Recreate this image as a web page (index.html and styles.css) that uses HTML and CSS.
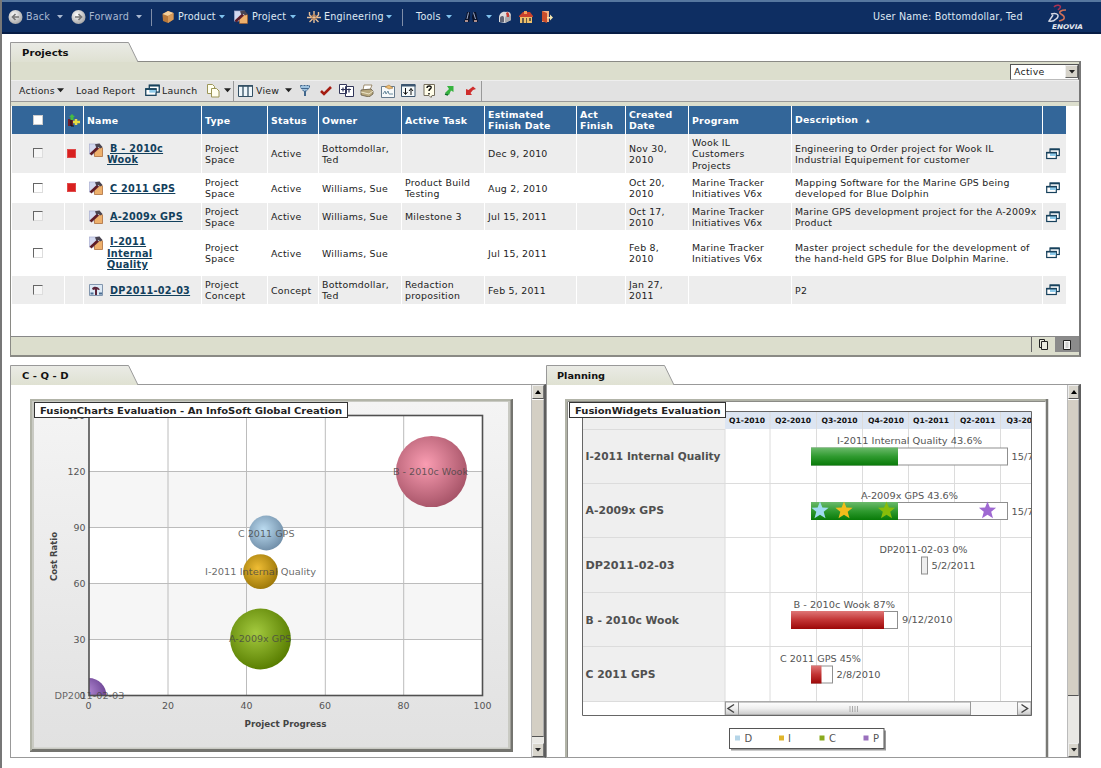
FILE: index.html
```html
<!DOCTYPE html>
<html lang="en">
<head>
<meta charset="utf-8">
<title>Projects</title>
<link rel="stylesheet" href="styles.css">
</head>
<body>
<svg class="defs" width="0" height="0">
  <defs>
    <symbol id="caret" viewBox="0 0 6 4"><path d="M0 0H6L3 3.6Z" fill="currentColor"/></symbol>
    <symbol id="project" viewBox="0 0 14 14">
      <rect x=".5" y="1" width="10" height="10" fill="#d3d9f0" stroke="#a9aed0" stroke-width=".7"/>
      <path d="M5.500 9.500L12 3.500l1.500 1.500v8.500h-8z" fill="#eeb06c" stroke="#a4602c" stroke-width=".7"/>
      <path d="M1.500 11.500L9 4.500" stroke="#5e1c28" stroke-width="2.600"/>
      <path d="M6 1.200l4.500-.7L13.500 4l-1.800 1.400L9.500 4 8 5 6.800 3.500z" fill="#4a4450"/>
    </symbol>
    <symbol id="window" viewBox="0 0 14 12">
      <rect x="4" y="1" width="9.300" height="6.500" fill="#fff" stroke="#17415c" stroke-width="1.200"/>
      <path d="M4 1.500h9.300" stroke="#17415c" stroke-width="1.600"/>
      <rect x=".7" y="4.500" width="9.600" height="6" fill="#fff" stroke="#17415c" stroke-width="1.200"/>
      <rect x="4" y="5" width="6" height="3" fill="#8fcbea"/>
      <path d="M.2 4.700h10.600" stroke="#17415c" stroke-width="1.500"/>
    </symbol>
    <linearGradient id="tabFill" x1="0" y1="0" x2="0" y2="1"><stop offset="0" stop-color="#eaebe6"/><stop offset="1" stop-color="#dfe1d2"/></linearGradient>
    <linearGradient id="canvasFill" x1="0" y1="0" x2="0" y2="1"><stop offset="0" stop-color="#f4f4f4"/><stop offset="1" stop-color="#e1e1e1"/></linearGradient>
    <linearGradient id="green" x1="0" y1="0" x2="0" y2="1"><stop offset="0" stop-color="#6cba6c"/><stop offset=".5" stop-color="#2f9a2f"/><stop offset="1" stop-color="#087a08"/></linearGradient>
    <linearGradient id="red" x1="0" y1="0" x2="0" y2="1"><stop offset="0" stop-color="#df7777"/><stop offset=".5" stop-color="#c23434"/><stop offset="1" stop-color="#9c0808"/></linearGradient>
    <linearGradient id="thumb" x1="0" y1="0" x2="0" y2="1"><stop offset="0" stop-color="#fff"/><stop offset=".5" stop-color="#eee"/><stop offset="1" stop-color="#c8c8c8"/></linearGradient>
    <radialGradient id="pinkBall" cx=".42" cy=".4" r=".62"><stop offset="0" stop-color="#fa9db2"/><stop offset="1" stop-color="#a75468"/></radialGradient>
    <radialGradient id="blueBall" cx=".42" cy=".4" r=".62"><stop offset="0" stop-color="#bcdcf1"/><stop offset="1" stop-color="#718fa9"/></radialGradient>
    <radialGradient id="goldBall" cx=".42" cy=".4" r=".62"><stop offset="0" stop-color="#efbd35"/><stop offset="1" stop-color="#9d7808"/></radialGradient>
    <radialGradient id="greenBall" cx=".42" cy=".4" r=".62"><stop offset="0" stop-color="#a4ca3f"/><stop offset="1" stop-color="#587d00"/></radialGradient>
    <radialGradient id="purpleBall" cx=".42" cy=".4" r=".62"><stop offset="0" stop-color="#b58bd6"/><stop offset="1" stop-color="#684090"/></radialGradient>
    <radialGradient id="navBall" cx=".4" cy=".35" r=".65"><stop offset="0" stop-color="#fff"/><stop offset="1" stop-color="#a9a9a9"/></radialGradient>
  </defs>
</svg>
<div class="page">
  <header class="topbar">
    <svg width="15" height="16" viewBox="0 0 15 16"><circle cx="7.500" cy="8" r="7" fill="url(#navBall)"/><path d="M11 8H4.500M7.500 5L4.500 8l3 3" stroke="#777" stroke-width="1.700" fill="none"/></svg>
    <span class="dim">Back</span>
    <svg class="caret dim" width="6" height="4"><use href="#caret"/></svg>
    <svg width="15" height="16" viewBox="0 0 15 16"><circle cx="7.500" cy="8" r="7" fill="url(#navBall)"/><path d="M4 8h6.500M7.500 5l3 3-3 3" stroke="#777" stroke-width="1.700" fill="none"/></svg>
    <span class="dim">Forward</span>
    <svg class="caret dim" width="6" height="4"><use href="#caret"/></svg>
    <i class="divider"></i>
    <svg width="12" height="14" viewBox="0 0 12 14"><path d="M.5 4L6 1l5.500 2v6.500L6 13 1 11z" fill="#b8783a"/><path d="M.5 4L6 1l5.500 2L6 6z" fill="#f3cf9c"/><path d="M6 6l5.500-3v6.500L6 13z" fill="#d79a58"/></svg>
    <span>Product</span>
    <svg class="caret blue" width="6" height="4"><use href="#caret"/></svg>
    <svg width="14" height="14"><use href="#project"/></svg>
    <span>Project</span>
    <svg class="caret blue" width="6" height="4"><use href="#caret"/></svg>
    <svg width="14" height="14" viewBox="0 0 14 14" fill="none"><path d="M7 1v12M2.500 2v3l2.500 2M11.500 2v3L9 7M0 7.500h14M2.500 12l3-3M11.500 12l-3-3" stroke="#e6bf98" stroke-width="1.400"/><circle cx="7" cy="7" r="2.200" stroke="#c98042"/></svg>
    <span>Engineering</span>
    <svg class="caret blue" width="6" height="4"><use href="#caret"/></svg>
    <i class="divider"></i>
    <span>Tools</span>
    <svg class="caret blue" width="6" height="4"><use href="#caret"/></svg>
    <svg width="14" height="14" viewBox="0 0 14 14"><path d="M3 2h3v5l-1 5H0l2-5zM9 2h3l1 5 1 5H9L8 7z" fill="#0a1228"/><path d="M4.500 2.500L3 9M9.500 2.500L11.500 9" stroke="#9eabc9" stroke-width="1"/><path d="M1 11h3M10 11h3" stroke="#e2b7ac" stroke-width="1.500"/></svg>
    <svg class="caret blue" width="6" height="4"><use href="#caret"/></svg>
    <svg width="13" height="14" viewBox="0 0 13 14"><path d="M0 8c0-4 3-7 7-6 3-1 5 1 5 4v4l-6 3-6-1z" fill="#dcdcdc"/><path d="M6 13V8c1-4 5-4 6-2v4z" fill="#a9a9ad"/><path d="M1 8c0-2 4-3 4 0v4H1z" fill="#606474"/><path d="M7 3l2-1 1 2v3H8z" fill="#c83b31"/></svg>
    <svg width="14" height="14" viewBox="0 0 14 14"><path d="M0 6l4-4h7l3 4v1H0z" fill="#c8412c"/><path d="M1 7h12v6H1z" fill="#efc06a"/><path d="M5 1l3 0v3H5z" fill="#f1a05a"/><path d="M3 8h2v5H3zM7 8h1v5H7zM10 8h2v3h-2z" fill="#675c4a"/></svg>
    <svg width="12" height="14" viewBox="0 0 12 14"><path d="M1 1h7v11H1z" fill="#f2b184"/><path d="M1 1l5 2v10l-5-2z" fill="#c94e2c"/><path d="M6 7h3V4.500L12 7.500l-3 3V8.500H6z" fill="#f5e6b0"/></svg>
    <span class="user">User Name: Bottomdollar, Ted</span>
    <svg width="40" height="27" viewBox="0 0 40 27"><path d="M7 3c2-3 8-2 6 1l-2 2" stroke="#a83252" stroke-width="1.500" fill="none"/><path d="M4 10c7-2 9 2 5 5-2 2-4 3-7 2l4-6" stroke="#d4d9e5" stroke-width="1.500" fill="none"/><path d="M19 6c-5 0-8 2-5 4 5 3 4 6-2 7" stroke="#cf7058" stroke-width="1.600" fill="none"/><text x="5" y="25" class="logo-text" textLength="31" lengthAdjust="spacingAndGlyphs">ENOVIA</text></svg>
  </header>

  <section class="projects">
    <svg class="tab" width="129" height="20" viewBox="0 0 129 20"><path d="M.5 20V.5H118.500L128 20" fill="url(#tabFill)" stroke="#999"/><text x="12" y="14" class="tab-text" textLength="46.500" lengthAdjust="spacingAndGlyphs">Projects</text></svg>
    <div class="panel">
      <div class="filterbar"><div class="select"><span>Active</span><b><svg width="6" height="4"><use href="#caret"/></svg></b></div></div>
      <div class="toolbar">
        <span>Actions</span>
        <svg class="caret" width="7" height="5"><use href="#caret"/></svg>
        <span>Load Report</span>
        <svg width="15" height="13"><use href="#window"/></svg>
        <span>Launch</span>
        <svg width="13" height="14" viewBox="0 0 13 14" fill="#fffff0" stroke="#9c9658"><path d="M.5.500h5l2 2v7h-7z"/><path d="M4.500 4.500h5l2.500 2.500v6H4.500z"/></svg>
        <svg class="caret" width="7" height="5"><use href="#caret"/></svg>
        <i class="divider"></i>
        <svg width="15" height="12" viewBox="0 0 15 12"><path d="M.5.500h14v11H.5z" fill="#eef6fa" stroke="#345064"/><path d="M0 1h15" stroke="#345064" stroke-width="1.600"/><path d="M5 1v10M10 1v10" stroke="#345064" stroke-width="1.300"/></svg>
        <span>View</span>
        <svg class="caret" width="7" height="5"><use href="#caret"/></svg>
        <svg width="10" height="11" viewBox="0 0 10 11"><path d="M.5.500h9v2L6.500 6h-3L.5 2.500z" fill="#9fc3df" stroke="#42678c" stroke-dasharray="2 1"/><path d="M1.500 3.500h7" stroke="#42678c"/><path d="M5 6v5" stroke="#42678c" stroke-width="2"/></svg>
        <svg width="12" height="11" viewBox="0 0 12 11"><path d="M1 6l3 3L11 2" stroke="#a51d12" stroke-width="2.600" fill="none"/></svg>
        <svg width="15" height="13" viewBox="0 0 15 13" fill="#fff" stroke="#32365a"><path d="M.5.500h7v9h-7zM6.500 2.500h8v10h-8z"/><path d="M2 5.500h10M4 3.500v4M10 4.500v4" stroke-width="1.200"/></svg>
        <svg width="14" height="13" viewBox="0 0 14 13"><path d="M4 1l8 0-2 5H3z" fill="#fff" stroke="#8b7651" stroke-width=".8"/><path d="M1 6l10-1 2 2v3l-4 3-8-2z" fill="#b7a77d" stroke="#665b45" stroke-width=".8"/><path d="M1 8l8 2 4-3" stroke="#ede5c8" fill="none"/></svg>
        <svg width="14" height="14" viewBox="0 0 14 14"><path d="M.5 2.500h13v11H.5z" fill="#f6f9fa" stroke="#657a8c"/><path d="M4 3l4-2 4 3-4 1z" fill="#edbd73" stroke="#a8793b" stroke-width=".6"/><path d="M2 10l2-3 1 3 2-3 1 3h4" stroke="#6c8c9e" fill="none"/></svg>
        <svg width="15" height="13" viewBox="0 0 15 13"><path d="M.5.500h13.500v12H.5z" fill="#f6fafb" stroke="#3d5670"/><path d="M0 1.500h14.500" stroke="#3d5670" stroke-width="2"/><path d="M4.500 4v6M2.500 8l2 2.500 2-2.500M10 11V4.500M8 7l2-2.500L12 7" fill="none" stroke="#111"/></svg>
        <svg width="13" height="14" viewBox="0 0 13 14"><path d="M1 .5h10.500v11H9L8 13.500 6 11.500H1z" fill="#fffde9" stroke="#756e5c"/><path d="M4 4c0-3 5-2.500 4 0-.5 1-2 1-2 3M6 9v1.500" stroke="#111" stroke-width="1.500" fill="none"/></svg>
        <svg width="10" height="11" viewBox="0 0 10 11"><path d="M3 1h6.500v6L7 5.500 5 10 1 8l4-4z" fill="#36b33e"/><path d="M1 9l3 1" stroke="#0b6d25" stroke-width="1.500"/></svg>
        <svg width="11" height="10" viewBox="0 0 11 10"><path d="M1 3v6h6L5.500 7 8 4l3-1L8 .5 3.500 4z" fill="#cf2d2c"/></svg>
        <i class="divider"></i>
      </div>
      <div class="grid">
        <div class="row head">
          <div class="mid"><i class="check solid"></i></div>
          <div class="mid"><svg width="13" height="14" viewBox="0 0 13 14"><path d="M1 6h5v7H1z" fill="#721f2c"/><path d="M5 1l3 3H6.500v3h-3V4H2z" fill="#45bc41"/><path d="M9 6v6M6 9h7" stroke="#e8dc42" stroke-width="2.500"/><path d="M4 7v6h3" stroke="#111" fill="none"/></svg></div>
          <div>Name</div><div>Type</div><div>Status</div><div>Owner</div><div>Active Task</div><div>Estimated<br>Finish Date</div><div>Act<br>Finish</div><div>Created<br>Date</div><div>Program</div><div><p>Description <small>▲</small></p></div><div></div>
        </div>
        <div class="row r1 alt">
          <div class="mid"><i class="check"></i></div><div class="mid"><i class="flag"></i></div>
          <div class="name"><svg width="14" height="14"><use href="#project"/></svg><a>B - 2010c<br>Wook</a></div>
          <div>Project<br>Space</div><div>Active</div><div>Bottomdollar,<br>Ted</div><div></div><div>Dec 9, 2010</div><div></div><div>Nov 30,<br>2010</div><div>Wook IL<br>Customers<br>Projects</div><div>Engineering to Order project for Wook IL<br>Industrial Equipement for customer</div><div><svg width="14" height="12"><use href="#window"/></svg></div>
        </div>
        <div class="row r2">
          <div class="mid"><i class="check"></i></div><div class="mid"><i class="flag"></i></div>
          <div class="name"><svg width="14" height="14"><use href="#project"/></svg><a>C 2011 GPS</a></div>
          <div>Project<br>Space</div><div>Active</div><div>Williams, Sue</div><div>Product Build<br>Testing</div><div>Aug 2, 2010</div><div></div><div>Oct 20,<br>2010</div><div>Marine Tracker<br>Initiatives V6x</div><div>Mapping Software for the Marine GPS being<br>developed for Blue Dolphin</div><div><svg width="14" height="12"><use href="#window"/></svg></div>
        </div>
        <div class="row r3 alt">
          <div class="mid"><i class="check"></i></div><div></div>
          <div class="name"><svg width="14" height="14"><use href="#project"/></svg><a>A-2009x GPS</a></div>
          <div>Project<br>Space</div><div>Active</div><div>Williams, Sue</div><div>Milestone 3</div><div>Jul 15, 2011</div><div></div><div>Oct 17,<br>2010</div><div>Marine Tracker<br>Initiatives V6x</div><div>Marine GPS development project for the A-2009x<br>Product</div><div><svg width="14" height="12"><use href="#window"/></svg></div>
        </div>
        <div class="row r4">
          <div class="mid"><i class="check"></i></div><div></div>
          <div class="name"><svg width="14" height="14"><use href="#project"/></svg><a>I-2011<br>Internal<br>Quality</a></div>
          <div>Project<br>Space</div><div>Active</div><div>Williams, Sue</div><div></div><div>Jul 15, 2011</div><div></div><div>Feb 8,<br>2010</div><div>Marine Tracker<br>Initiatives V6x</div><div>Master project schedule for the development of<br>the hand-held GPS for Blue Dolphin Marine.</div><div><svg width="14" height="12"><use href="#window"/></svg></div>
        </div>
        <div class="row r5 alt">
          <div class="mid"><i class="check"></i></div><div></div>
          <div class="name"><svg width="14" height="14" viewBox="0 0 14 14"><path d="M.5 1.500h13v11H.5z" fill="#dce9f5" stroke="#8296ae"/><path d="M3 5.500c1-2 4-2 6-1l2 2-2 .5-1-1v6H6V6.500L4 7z" fill="#5b2439"/><path d="M1.500 10.500h3M10 10.500h3" stroke="#4b6d92" stroke-width="2"/></svg><a>DP2011-02-03</a></div>
          <div>Project<br>Concept</div><div>Concept</div><div>Bottomdollar,<br>Ted</div><div>Redaction<br>proposition</div><div>Feb 5, 2011</div><div></div><div>Jan 27,<br>2011</div><div></div><div>P2</div><div><svg width="14" height="12"><use href="#window"/></svg></div>
        </div>
      </div>
      <div class="footer">
        <div class="view"><svg width="9" height="11" viewBox="0 0 9 11" fill="#e9eadf" stroke="#222"><path d="M.5.500h5v8h-5z"/><path d="M2.500 2.500h6v8h-6z"/></svg></div>
        <div class="view on"><svg width="8" height="10" viewBox="0 0 8 10"><path d="M.5.500h7v9h-7z" fill="#f4f4f4" stroke="#222"/><path d="M2.500 3h3M2.500 5h3M2.500 7h3" stroke="#aaa"/></svg></div>
      </div>
    </div>
  </section>

  <div class="charts">
    <section class="chart left">
      <svg class="tab" width="129" height="20" viewBox="0 0 129 20"><path d="M.5 20V.5H118.500L128 20" fill="url(#tabFill)" stroke="#999"/><text x="12" y="14" class="tab-text" textLength="46.500" lengthAdjust="spacingAndGlyphs">C - Q - D</text></svg>
      <div class="chart-body">
        <svg class="plot" width="520" height="372" viewBox="11 385 520 372">
          <rect x="30" y="399" width="483" height="353" fill="#74746f"/>
          <path d="M30 399h482l-2 2H32v349l-2 1z" fill="#b2b4a8"/>
          <rect x="32" y="401" width="478.500" height="348" fill="#c9cac3"/>
          <rect x="34" y="402" width="474" height="345.500" fill="url(#canvasFill)"/>
          <rect x="89" y="415.500" width="393.500" height="280" fill="#fff"/>
          <path d="M89 471.500h393v56H89zM89 583.500h393v55.500H89z" fill="#f6f6f6"/>
          <path d="M168 416v280M246.500 416v280M325.300 416v280M403.700 416v280M89 471.500h393M89 527.500h393M89 583.500h393M89 639.500h393" stroke="#bcbcbc" fill="none"/>
          <clipPath id="plotArea"><rect x="89" y="415" width="393" height="280.500"/></clipPath>
          <g clip-path="url(#plotArea)">
            <circle cx="431.500" cy="471.500" r="35.600" fill="url(#pinkBall)"/>
            <circle cx="266.300" cy="533" r="17.400" fill="url(#blueBall)"/>
            <circle cx="260.500" cy="571.700" r="17.400" fill="url(#goldBall)"/>
            <circle cx="260.500" cy="639" r="30.400" fill="url(#greenBall)"/>
            <circle cx="89" cy="695.500" r="17.400" fill="url(#purpleBall)"/>
          </g>
          <rect x="89" y="415.500" width="393.500" height="280" fill="none" stroke="#505050" stroke-width="1.600"/>
          <g class="axis">
            <text x="67" y="419" textLength="18" lengthAdjust="spacingAndGlyphs">150</text><text x="67.500" y="474.500" textLength="18" lengthAdjust="spacingAndGlyphs">120</text><text x="73.500" y="530.500" textLength="12" lengthAdjust="spacingAndGlyphs">90</text><text x="73.500" y="587" textLength="12" lengthAdjust="spacingAndGlyphs">60</text><text x="73.500" y="642.500" textLength="12" lengthAdjust="spacingAndGlyphs">30</text><text x="79.500" y="698.500" textLength="6" lengthAdjust="spacingAndGlyphs">0</text>
            <text x="85.500" y="708.500" textLength="6" lengthAdjust="spacingAndGlyphs">0</text><text x="162" y="708.500" textLength="12" lengthAdjust="spacingAndGlyphs">20</text><text x="240.500" y="708.500" textLength="12" lengthAdjust="spacingAndGlyphs">40</text><text x="319" y="708.500" textLength="12" lengthAdjust="spacingAndGlyphs">60</text><text x="397.500" y="708.500" textLength="12" lengthAdjust="spacingAndGlyphs">80</text><text x="473.500" y="708.500" textLength="18" lengthAdjust="spacingAndGlyphs">100</text>
          </g>
          <g class="bubble-label">
            <text x="393" y="474.500" textLength="75" lengthAdjust="spacingAndGlyphs">B - 2010c Wook</text>
            <text x="238" y="536.500" textLength="56.500" lengthAdjust="spacingAndGlyphs">C 2011 GPS</text>
            <text x="205" y="574.500" textLength="111" lengthAdjust="spacingAndGlyphs">I-2011 Internal Quality</text>
            <text x="229" y="642" textLength="62" lengthAdjust="spacingAndGlyphs">A-2009x GPS</text>
            <text x="54.500" y="698.500" textLength="70" lengthAdjust="spacingAndGlyphs">DP2011-02-03</text>
          </g>
          <text x="244.500" y="726.500" class="axis-title" textLength="82" lengthAdjust="spacingAndGlyphs">Project Progress</text>
          <text transform="translate(57 581) rotate(-90)" class="axis-title" textLength="49" lengthAdjust="spacingAndGlyphs">Cost Ratio</text>
          <rect x="34.500" y="402.500" width="313" height="15" fill="#fff" stroke="#333"/>
          <text x="40" y="413.500" class="chart-title" textLength="302" lengthAdjust="spacingAndGlyphs">FusionCharts Evaluation - An InfoSoft Global Creation</text>
        </svg>
        <div class="scroll"><b><svg width="6" height="4" viewBox="0 0 6 4"><path d="M0 4H6L3 0z"/></svg></b><div class="thumb"></div><div class="track"></div><b><svg width="6" height="4"><use href="#caret"/></svg></b></div>
      </div>
    </section>
    <section class="chart right">
      <svg class="tab" width="129" height="20" viewBox="0 0 129 20"><path d="M.5 20V.5H118.500L128 20" fill="url(#tabFill)" stroke="#999"/><text x="11" y="14" class="tab-text" textLength="48" lengthAdjust="spacingAndGlyphs">Planning</text></svg>
      <div class="chart-body">
        <svg class="plot" width="520" height="372" viewBox="547 385 520 372">
          <path d="M566 757V400h481" fill="none" stroke="#b2b4a8" stroke-width="2"/>
          <path d="M567.500 757V401.500h478" fill="none" stroke="#8b8b86"/>
          <path d="M1047 399V757" stroke="#797975" stroke-width="2.500"/>
          <rect x="583" y="412" width="142" height="289.500" fill="#efefef"/>
          <rect x="725" y="412" width="306" height="17" fill="#dce5f2"/>
          <path d="M583 429.500H725M583 483.500h448M583 537.500h448M583 592.500h448M583 646.500h448M583 701.500h448M725 429v272M770 412v289M816.500 412v289M862.500 412v289M908.500 412v289M954.500 412v289M1000.500 412v289" stroke="#dcdcdc" fill="none"/>
          <g class="bars" fill="#fff" stroke="#8f8f8f">
            <rect x="811.500" y="448" width="196" height="17"/>
            <rect x="811.500" y="502.500" width="196" height="17"/>
            <rect x="921.500" y="557" width="6" height="17" fill="#eee"/>
            <rect x="791.500" y="611.500" width="106" height="17"/>
            <rect x="811.500" y="666" width="21" height="17"/>
          </g>
          <rect x="811" y="447.500" width="87" height="18" fill="url(#green)"/>
          <rect x="811" y="502" width="87" height="18" fill="url(#green)"/>
          <rect x="791" y="611" width="93" height="18" fill="url(#red)"/>
          <rect x="811" y="665.500" width="10.500" height="18" fill="url(#red)"/>
          <path d="M820 501.500l2.400 6.100 6.200.2-4.900 4 1.800 6.500-5.500-3.600-5.500 3.600 1.800-6.500-4.900-4 6.200-.2z" fill="#9fdbef"/>
          <path transform="translate(24 0)" d="M820 501.500l2.400 6.100 6.200.2-4.900 4 1.800 6.500-5.500-3.600-5.500 3.600 1.800-6.500-4.900-4 6.200-.2z" fill="#f3bd1b"/>
          <path transform="translate(66.500 0)" d="M820 501.500l2.400 6.100 6.200.2-4.900 4 1.800 6.500-5.500-3.600-5.500 3.600 1.800-6.500-4.900-4 6.200-.2z" fill="#87bd0a"/>
          <path transform="translate(167.500 0)" d="M820 501.500l2.400 6.100 6.200.2-4.900 4 1.800 6.500-5.500-3.600-5.500 3.600 1.800-6.500-4.900-4 6.200-.2z" fill="#9f69d2"/>
          <clipPath id="gantt"><rect x="583" y="412" width="448" height="304"/></clipPath>
          <g clip-path="url(#gantt)">
            <g class="quarter">
              <text x="729" y="423" textLength="36" lengthAdjust="spacingAndGlyphs">Q1-2010</text><text x="775" y="423" textLength="36" lengthAdjust="spacingAndGlyphs">Q2-2010</text><text x="821.500" y="423" textLength="36" lengthAdjust="spacingAndGlyphs">Q3-2010</text><text x="868" y="423" textLength="36" lengthAdjust="spacingAndGlyphs">Q4-2010</text><text x="913" y="423" textLength="36" lengthAdjust="spacingAndGlyphs">Q1-2011</text><text x="960" y="423" textLength="35.500" lengthAdjust="spacingAndGlyphs">Q2-2011</text><text x="1006.500" y="423" textLength="36" lengthAdjust="spacingAndGlyphs">Q3-2011</text>
            </g>
            <g class="bar-label">
              <text x="837" y="444" textLength="145" lengthAdjust="spacingAndGlyphs">I-2011 Internal Quality 43.6%</text><text x="861" y="498.500" textLength="97" lengthAdjust="spacingAndGlyphs">A-2009x GPS 43.6%</text><text x="879.500" y="553" textLength="88" lengthAdjust="spacingAndGlyphs">DP2011-02-03 0%</text><text x="793.500" y="607.500" textLength="101.500" lengthAdjust="spacingAndGlyphs">B - 2010c Wook 87%</text><text x="780" y="662" textLength="81" lengthAdjust="spacingAndGlyphs">C 2011 GPS 45%</text>
              <text x="1011.500" y="460" textLength="50" lengthAdjust="spacingAndGlyphs">15/7/2011</text><text x="1011.500" y="514.500" textLength="50" lengthAdjust="spacingAndGlyphs">15/7/2011</text><text x="931.500" y="569" textLength="44" lengthAdjust="spacingAndGlyphs">5/2/2011</text><text x="902" y="623" textLength="50.500" lengthAdjust="spacingAndGlyphs">9/12/2010</text><text x="836.500" y="677.500" textLength="44" lengthAdjust="spacingAndGlyphs">2/8/2010</text>
            </g>
          </g>
          <g class="task">
            <text x="585.500" y="459.500" textLength="135" lengthAdjust="spacingAndGlyphs">I-2011 Internal Quality</text><text x="585.500" y="514" textLength="78.500" lengthAdjust="spacingAndGlyphs">A-2009x GPS</text><text x="585.500" y="569" textLength="89" lengthAdjust="spacingAndGlyphs">DP2011-02-03</text><text x="585.500" y="623.500" textLength="93.500" lengthAdjust="spacingAndGlyphs">B - 2010c Wook</text><text x="585.500" y="678" textLength="70" lengthAdjust="spacingAndGlyphs">C 2011 GPS</text>
          </g>
          <rect x="725" y="701.500" width="306" height="14" fill="#f8f8f8" stroke="#bbb"/>
          <rect x="725.500" y="702" width="13" height="13" fill="url(#thumb)" stroke="#999"/>
          <rect x="738.500" y="702" width="232" height="13" fill="url(#thumb)" stroke="#999"/>
          <rect x="1017.500" y="702" width="13.500" height="13" fill="url(#thumb)" stroke="#999"/>
          <path d="M734 704.500l-6 4 6 4M1021.500 704.500l6 4-6 4" fill="none" stroke="#444" stroke-width="1.500"/>
          <path d="M850 706v6M852.500 706v6M855 706v6M857.500 706v6" stroke="#aaa"/>
          <path d="M582.500 412V715.500H1031.500V411.500H725" fill="none" stroke="#666"/>
          <rect x="731" y="730.500" width="155" height="20" fill="#999"/>
          <rect x="729.500" y="728.500" width="154.500" height="20" fill="#fff" stroke="#555"/>
          <rect x="735" y="735.500" width="5" height="5" fill="#b5d5e8"/><rect x="779" y="735.500" width="5" height="5" fill="#e0b52c"/><rect x="819.500" y="735.500" width="5" height="5" fill="#8aaa1d"/><rect x="863.500" y="735.500" width="5" height="5" fill="#9a70bd"/>
          <g class="legend"><text x="744.500" y="742">D</text><text x="788" y="742">I</text><text x="829" y="742">C</text><text x="873" y="742">P</text></g>
          <rect x="569.500" y="402.500" width="156" height="15" fill="#fff" stroke="#333"/>
          <text x="575" y="413.500" class="chart-title" textLength="145.500" lengthAdjust="spacingAndGlyphs">FusionWidgets Evaluation</text>
        </svg>
        <div class="scroll"><b><svg width="6" height="4" viewBox="0 0 6 4"><path d="M0 4H6L3 0z"/></svg></b><div class="thumb"></div><div class="track"></div><b><svg width="6" height="4"><use href="#caret"/></svg></b></div>
      </div>
    </section>
  </div>
</div>
</body>
</html>
```
FILE: styles.css
```css
* { box-sizing: border-box; }
body { margin: 0; background: #fff; font: 9.4px/11.3px "DejaVu Sans", Verdana, sans-serif; letter-spacing: .24px; color: #222; }
.defs { position: absolute; }
svg { display: block; letter-spacing: 0; }
p { margin: 0; }
.page { width: 1101px; height: 768px; border-left: 2px solid #777; overflow: hidden; }

.topbar { height: 34px; padding-left: 6px; background: #0e2e62; border-top: 2px solid #56779f; border-bottom: 2px solid #071d45; display: grid; align-items: center; color: #dfe8f3;
  grid-template-columns: 18px 31px 14px 18px 47px 15px 11px 16px 41px 15px 18px 38px 17px 17px 62px 16px 14px 30px 18px 22px 13px 20px 22px 332px 174px 52px; }
.topbar span { white-space: nowrap; font-size: 9.6px; letter-spacing: .2px; }
.topbar .dim { color: #a9b8d0; }
.topbar .blue { color: #7fc2ee; }
.topbar .divider { width: 1px; height: 17px; background: #7f8ea9; }
.logo-text { font: italic bold 6.5px "DejaVu Sans", sans-serif; fill: #e6e9f0; }

.projects { margin: 8px 0 0 8px; width: 1071px; }
.tab-text { font: bold 9.4px "DejaVu Sans", sans-serif; fill: #111; }
.tab { position: relative; margin-bottom: -1px; }
.panel { height: 296px; border: 1px solid #8a8a85; border-right: 2px solid #777; border-bottom-width: 2px; display: flex; flex-direction: column; }
.filterbar { height: 18px; background: #dcdecd; display: flex; justify-content: flex-end; align-items: flex-end; }
.select { width: 69px; height: 16px; background: #fff; border: 1px solid #555; border-bottom-color: #bbb; display: flex; justify-content: space-between; align-items: center; padding-left: 3px; }
.select b { width: 13px; height: 13px; background: #d6d3ca; border: 1px solid #eee; border-right-color: #666; border-bottom-color: #666; display: flex; align-items: center; justify-content: center; }
.toolbar { height: 22px; padding-left: 8px; background: #e2e2e2; border-top: 1px solid #eee; border-bottom: 1px solid #999; display: grid; align-items: center; justify-content: start; white-space: nowrap;
  grid-template-columns: 38px 19px 69px 17px 45px 17px 9px 5px 18px 29px 15px 20px 19px 21px 21px 20px 22px 21px 21px 16px 4px; }
.toolbar .divider { width: 1px; height: 20px; background: #999; }

.grid { height: 235px; border-top: 4px solid #dcdecd; padding-left: 1px; }
.row { display: grid; grid-template-columns: 53px 19px 118px 66px 51px 83px 83px 92px 49px 63px 103px 251px 23px; width: 1054px; }
.row > div { border-right: 1px solid #fff; padding: 1px 0 0 3px; display: flex; align-items: center; white-space: nowrap; }
.row > div:last-child { border-right: 0; }
.row > .mid { justify-content: center; padding: 0; }
.head { height: 28px; background: #336699; color: #fff; font-weight: bold; }
.head small { font-size: 5px; margin-left: 4px; vertical-align: 1px; }
.r1 { height: 39px; }
.r2 { height: 30px; }
.r3 { height: 27px; }
.r4 { height: 46px; }
.r5 { height: 28px; }
.alt { background: #ededed; }
.check { width: 10px; height: 10px; background: #fff; border: 1px solid #ddd; border-top: 1px solid #666; border-left: 1px solid #666; }
.alt .check { background: #f6f6f6; }
.head .check { background: #fff; border-color: #ccc; }
.row > .mid:nth-child(2) { justify-content: flex-start; padding-left: 2px; }
.flag { width: 9px; height: 9px; background: #d8201f; border: 1px solid #e04a4a; }
.row > .name { padding-left: 5px; }
.r1 .name svg { margin-top: -8px; }
.r4 .name svg { margin-top: -20px; }
.name a { margin-left: 4px; text-indent: 3px; font-weight: bold; font-size: 9.7px; letter-spacing: .25px; color: #12405c; text-decoration: underline; }
.footer { height: 19px; background: #dcdecd; border-top: 1px solid #888; display: flex; justify-content: flex-end; }
.view { width: 24px; height: 15px; border-left: 1px solid #666; display: flex; align-items: center; justify-content: center; }
.view.on { background: #8b8b8b; border: 0; }

.charts { margin: 8px 0 0 8px; display: flex; width: 1071px; }
.left { width: 536px; }
.right { width: 535px; }
.chart-body { height: 374px; display: flex; border: 1px solid #999; border-right: 2px solid #5e5e5e; }
.plot { flex: none; }
.scroll { flex: 1; min-width: 0; display: flex; flex-direction: column; background: #e9e8e4; border-left: 1px solid #bbb; }
.scroll b { height: 14px; background: #d8d5cc; border: 1px solid #eee; border-right-color: #777; border-bottom-color: #555; display: flex; align-items: center; justify-content: center; }
.scroll b svg { flex: none; }
.thumb { height: 338px; background: #d4cfc4; border-top: 1px solid #fff; border-bottom: 1px solid #555; border-right: 1px solid #aaa; }
.right .thumb { height: 297px; }
.track { flex: 1; }

.axis { font-size: 8.3px; fill: #555; }
.bubble-label { font-size: 8.3px; fill: #444; fill-opacity: .8; }
.axis-title { font-size: 8.3px; font-weight: bold; fill: #444; }
.chart-title { font-size: 9px; font-weight: bold; fill: #222; }
.quarter { font-size: 7.300px; font-weight: bold; fill: #111; }
.bar-label { font-size: 8.3px; fill: #555; }
.task { font-size: 10.500px; font-weight: bold; fill: #505050; }
.legend { font-size: 10px; fill: #555; }
```
